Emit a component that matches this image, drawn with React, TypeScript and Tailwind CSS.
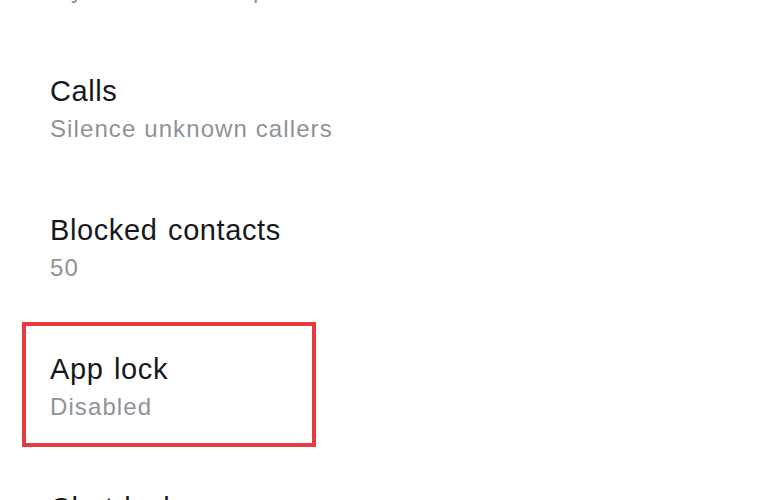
import React from "react";

type Item = { title: string; subtitle: string; highlight?: boolean };

const items: Item[] = [
  { title: "Groups", subtitle: "My contacts except" },
  { title: "Calls", subtitle: "Silence unknown callers" },
  { title: "Blocked contacts", subtitle: "50" },
  { title: "App lock", subtitle: "Disabled", highlight: true },
  { title: "Chat lock", subtitle: "Off" },
];

export default function App() {
  return (
    <div
      className="w-[780px] h-[500px] overflow-hidden bg-white"
      style={{ fontFamily: '"Liberation Sans", Arial, sans-serif' }}
    >
      <div className="mt-[-95px] flex flex-col">
        {items.map((it) => (
          <div key={it.title} className="relative h-[139px] pt-[29px] pl-[50px]">
            {it.highlight && (
              <div className="absolute left-[22px] top-0 w-[294px] h-[125px] border-4 border-[#e53b3f]" />
            )}
            <div className="text-[29px] leading-[36px] tracking-[0.6px] [word-spacing:2px] text-[#16191c]">
              {it.title}
            </div>
            <div className="mt-[2px] text-[24px] leading-[36px] tracking-[1.1px] text-[#8e9399]">
              {it.subtitle}
            </div>
          </div>
        ))}
      </div>
    </div>
  );
}
